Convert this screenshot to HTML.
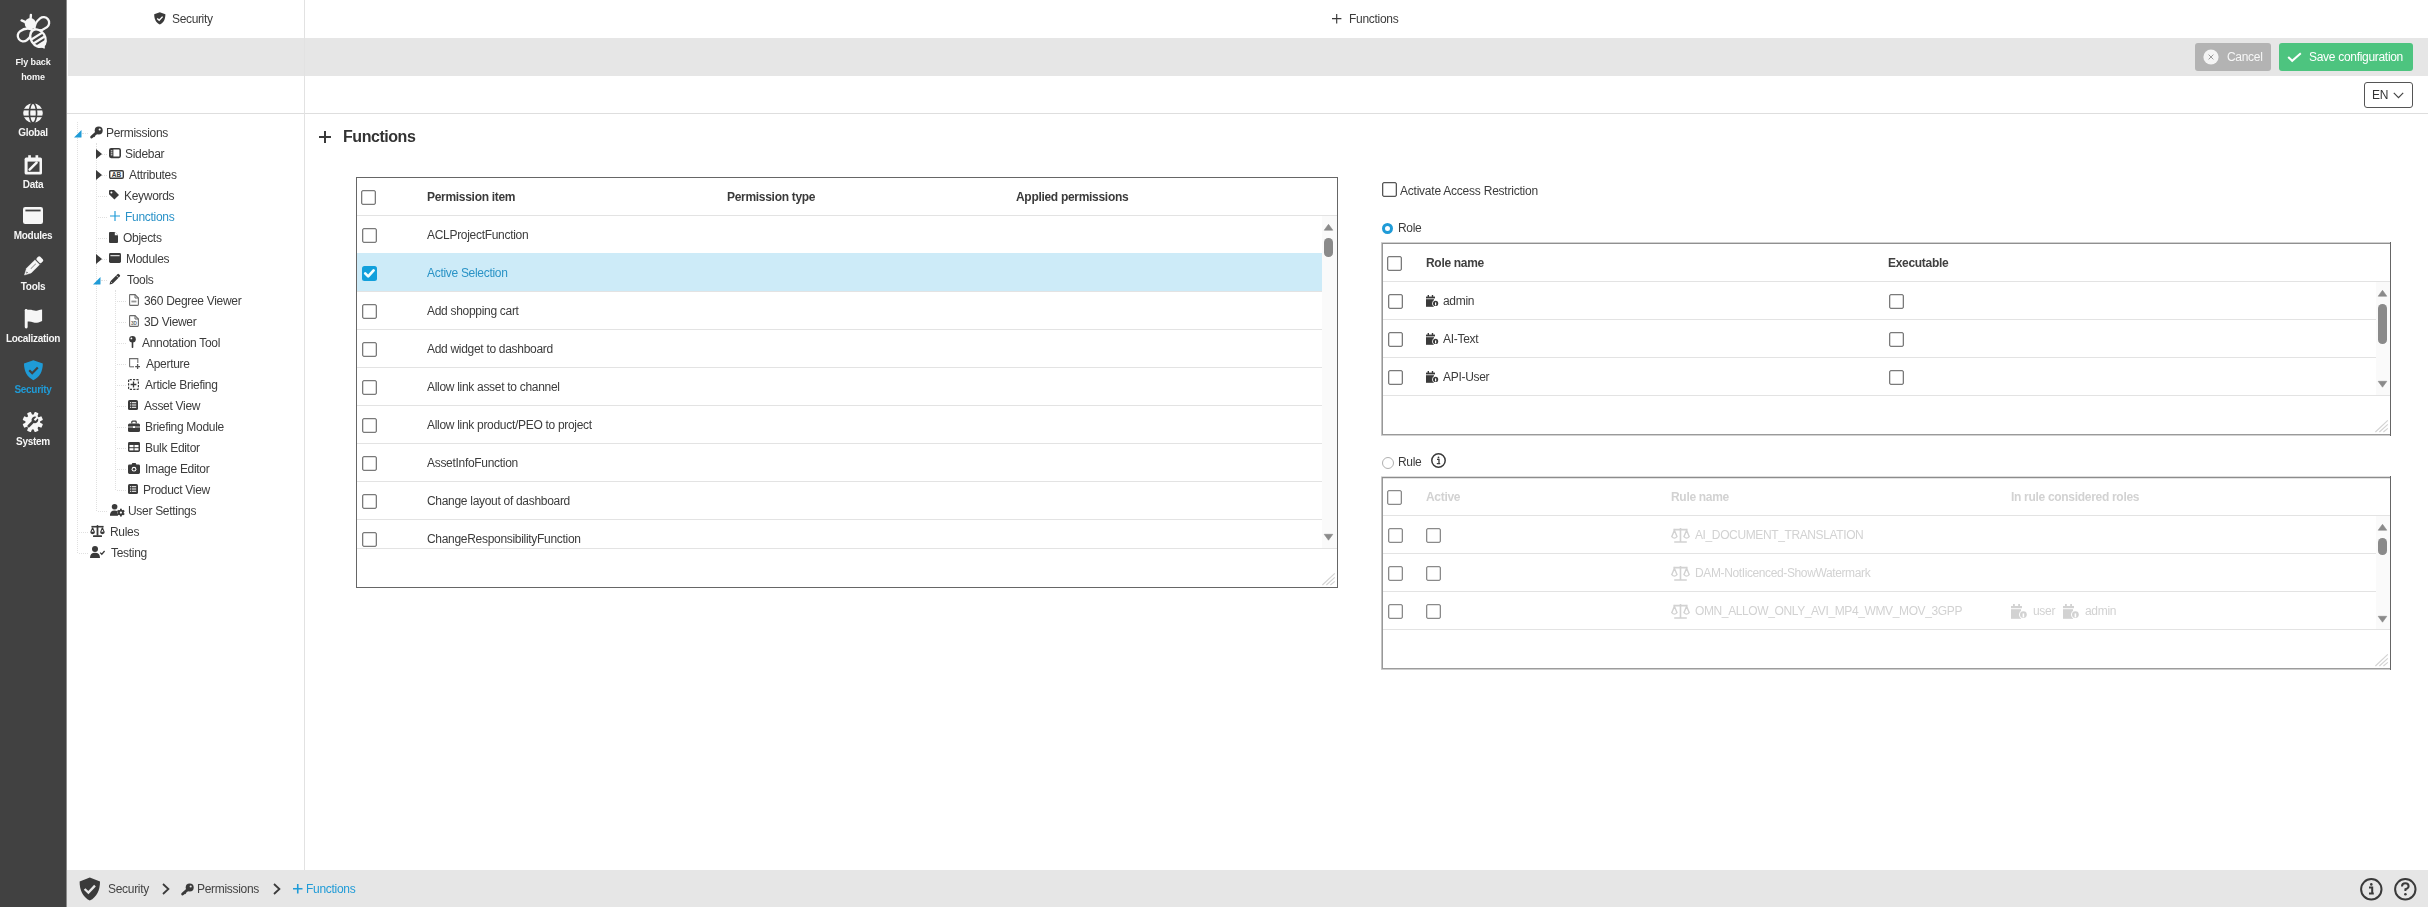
<!DOCTYPE html><html><head><meta charset="utf-8"><style>
html,body{margin:0;padding:0;width:2428px;height:907px;overflow:hidden;background:#fff;font-family:"Liberation Sans",sans-serif;}
.r{position:absolute;box-sizing:content-box}
.t{position:absolute;white-space:nowrap;font-family:"Liberation Sans",sans-serif;will-change:transform}
svg.r{overflow:visible}
</style></head><body>
<div class="r" style="left:0px;top:0px;width:66px;height:907px;background:#414141;"></div>
<div class="r" style="left:66px;top:0px;width:1px;height:907px;background:#8a8a8a;"></div>
<svg class="r" style="left:12px;top:10px;" width="44" height="44" viewBox="0 0 44 44">
    <defs><clipPath id="bodyclip"><ellipse cx="0" cy="0" rx="9.2" ry="7" /></clipPath></defs>
    <circle cx="18.3" cy="13.6" r="5.6" fill="#f6f6f6"/>
    <g stroke="#f6f6f6" stroke-width="2.4" stroke-linecap="round">
      <line x1="13.5" y1="12.2" x2="9.6" y2="10.4"/>
      <line x1="18.6" y1="8.6" x2="18.9" y2="4.9"/>
    </g>
    <path transform="translate(22.6 19.8) rotate(-38.3)" d="M0 0 C3.42 -5.60 8.60 -5.60 11.40 -5.60 A5.6 5.6 0 0 1 11.40 5.60 C8.60 5.60 3.42 5.60 0 0 Z" fill="none" stroke="#f6f6f6" stroke-width="2.3" stroke-linejoin="round"/>
    <path transform="translate(19.8 19.4) rotate(142.9)" d="M0 0 C3.18 -5.60 7.80 -5.60 10.60 -5.60 A5.6 5.6 0 0 1 10.60 5.60 C7.80 5.60 3.18 5.60 0 0 Z" fill="none" stroke="#f6f6f6" stroke-width="2.3" stroke-linejoin="round"/>
    <g transform="translate(26 28.2) rotate(58)">
      <ellipse cx="0" cy="0" rx="9.3" ry="7.1" fill="#414141" stroke="#f6f6f6" stroke-width="2.3"/>
      <g clip-path="url(#bodyclip)" fill="#f6f6f6">
        <rect x="-3.6" y="-9" width="2.3" height="18"/>
        <rect x="0.9" y="-9" width="2.3" height="18"/>
        <rect x="5.2" y="-9" width="6" height="18"/>
      </g>
      <path d="M8.4 -2 L11.6 0 L8.4 2 Z" fill="#f6f6f6" stroke="#f6f6f6" stroke-width="1.2" stroke-linejoin="round"/>
    </g>
    </svg>
<div class="t" style="left:0px;top:55px;font-size:9px;line-height:14px;color:#f6f6f6;letter-spacing:-0.1px;font-weight:700;width:66px;text-align:center;">Fly back</div>
<div class="t" style="left:0px;top:70px;font-size:9px;line-height:14px;color:#f6f6f6;letter-spacing:-0.1px;font-weight:700;width:66px;text-align:center;">home</div>
<svg class="r" style="left:23px;top:103px;" width="20" height="20" viewBox="0 0 20 20"><circle cx="10" cy="10" r="9.8" fill="#f6f6f6"/>
    <g fill="none" stroke="#414141" stroke-width="1.6">
      <ellipse cx="10" cy="10" rx="3.6" ry="9.8"/>
      <line x1="0" y1="6.6" x2="20" y2="6.6"/><line x1="0" y1="13.4" x2="20" y2="13.4"/>
    </g></svg>
<div class="t" style="left:0px;top:126px;font-size:10px;line-height:14px;color:#f6f6f6;letter-spacing:-0.3px;font-weight:700;width:66px;text-align:center;">Global</div>
<div class="t" style="left:0px;top:178px;font-size:10px;line-height:14px;color:#f6f6f6;letter-spacing:-0.3px;font-weight:700;width:66px;text-align:center;">Data</div>
<div class="t" style="left:0px;top:229px;font-size:10px;line-height:14px;color:#f6f6f6;letter-spacing:-0.3px;font-weight:700;width:66px;text-align:center;">Modules</div>
<div class="t" style="left:0px;top:280px;font-size:10px;line-height:14px;color:#f6f6f6;letter-spacing:-0.3px;font-weight:700;width:66px;text-align:center;">Tools</div>
<div class="t" style="left:0px;top:332px;font-size:10px;line-height:14px;color:#f6f6f6;letter-spacing:-0.3px;font-weight:700;width:66px;text-align:center;">Localization</div>
<div class="t" style="left:0px;top:383px;font-size:10px;line-height:14px;color:#1f9bd7;letter-spacing:-0.3px;font-weight:700;width:66px;text-align:center;">Security</div>
<div class="t" style="left:0px;top:435px;font-size:10px;line-height:14px;color:#f6f6f6;letter-spacing:-0.3px;font-weight:700;width:66px;text-align:center;">System</div>
<svg class="r" style="left:24px;top:155px;" width="19" height="20" viewBox="0 0 19 20"><rect x="0.6" y="2.6" width="17.4" height="17" rx="1.6" fill="#f6f6f6"/>
    <rect x="3.6" y="6.6" width="11.9" height="10.2" fill="#414141"/>
    <rect x="4.2" y="0.2" width="2.7" height="3" fill="#f6f6f6"/><rect x="11.5" y="0.2" width="2.7" height="3" fill="#f6f6f6"/>
    <path d="M5.6 14.6 L12.6 7.6" stroke="#f6f6f6" stroke-width="2.5" stroke-linecap="round"/></svg>
<svg class="r" style="left:23px;top:207px;" width="20" height="17" viewBox="0 0 20 17"><rect x="0" y="0" width="20" height="17" rx="2.2" fill="#f6f6f6"/><rect x="2.4" y="2.6" width="15.2" height="1.8" fill="#414141"/></svg>
<svg class="r" style="left:22.8px;top:256.3px;" width="20" height="21" viewBox="0 0 20 21"><g transform="rotate(45 10 10.5)">
    <rect x="6.7" y="-1.6" width="6.6" height="5" rx="1.6" fill="#f6f6f6"/>
    <path d="M6.7 4.2 H13.3 V16.4 L10 22.6 L6.7 16.4 Z" fill="#f6f6f6" stroke="#f6f6f6" stroke-width="0.4" stroke-linejoin="round"/>
    <rect x="6.4" y="3.4" width="7.2" height="0.9" fill="#414141" opacity="0.75"/>
    <rect x="9.6" y="6.6" width="0.9" height="7" fill="#414141" opacity="0.6"/>
    <path d="M9 18.4 L11 18.4 L10 20.4 Z" fill="#414141" opacity="0.8"/>
    </g></svg>
<svg class="r" style="left:24px;top:308.5px;" width="19" height="20" viewBox="0 0 19 20"><rect x="0.75" y="0" width="2.9" height="19.4" rx="1.3" fill="#f6f6f6"/>
    <path d="M2.4 1.4 C7 -0.2 10 2.4 13.6 1.4 C15.4 0.9 16.8 0.6 18.1 0.6 L18.1 12 C16.6 12.6 15 13.6 13 13.8 C9.4 14 7 11.4 2.4 12.8 Z" fill="#f6f6f6"/></svg>
<svg class="r" style="left:24px;top:360px;" width="19" height="21" viewBox="0 0 19 21"><path d="M9.4 0.2 L18.8 3.6 C18.8 11 16 17 9.4 20.3 C2.8 17 0 11 0 3.6 Z" fill="#1f9bd7"/>
    <path d="M5.2 10.2 L8.2 13.2 L13.8 7.4" fill="none" stroke="#414141" stroke-width="2.2"/></svg>
<svg class="r" style="left:23px;top:412px;" width="20" height="21" viewBox="0 0 20 21"><g transform="translate(9.8 10)">
    <g fill="#f6f6f6"><circle r="7.4"/><rect x="-2.1" y="-10.2" width="4.2" height="5" rx="0.8" transform="rotate(22.5)"/><rect x="-2.1" y="-10.2" width="4.2" height="5" rx="0.8" transform="rotate(67.5)"/><rect x="-2.1" y="-10.2" width="4.2" height="5" rx="0.8" transform="rotate(112.5)"/><rect x="-2.1" y="-10.2" width="4.2" height="5" rx="0.8" transform="rotate(157.5)"/><rect x="-2.1" y="-10.2" width="4.2" height="5" rx="0.8" transform="rotate(202.5)"/><rect x="-2.1" y="-10.2" width="4.2" height="5" rx="0.8" transform="rotate(247.5)"/><rect x="-2.1" y="-10.2" width="4.2" height="5" rx="0.8" transform="rotate(292.5)"/><rect x="-2.1" y="-10.2" width="4.2" height="5" rx="0.8" transform="rotate(337.5)"/></g>
    <g transform="rotate(45)">
      <rect x="-1.3" y="-2" width="2.6" height="9" rx="1" fill="#414141"/>
      <circle cx="0" cy="-3" r="3.2" fill="#414141"/>
      <rect x="-1.1" y="-7" width="2.2" height="4.6" fill="#f6f6f6"/>
    </g>
    </g></svg>
<div class="r" style="left:68px;top:38px;width:2360px;height:38px;background:#e6e6e6;"></div>
<div class="r" style="left:67px;top:113px;width:2361px;height:1px;background:#dedede;"></div>
<div class="r" style="left:304px;top:0px;width:1px;height:870px;background:#e2e2e2;"></div>
<div class="r" style="left:67px;top:870px;width:2361px;height:37px;background:#e6e6e6;"></div>
<svg class="r" style="left:153.8px;top:12.3px;" width="12" height="13" viewBox="0 0 12 13"><path d="M5.8 0.2 L11.4 2.2 C11.4 7 9.8 10.6 5.8 12.6 C1.8 10.6 0.2 7 0.2 2.2 Z" fill="#3a3a3a"/><path d="M3.2 6.4 L5.2 8.3 L8.6 4.6" fill="none" stroke="#fff" stroke-width="1.4"/></svg>
<div class="t" style="left:171.6px;top:12px;font-size:12px;line-height:14px;color:#3c3c3c;letter-spacing:-0.35px;">Security</div>
<svg class="r" style="left:1332px;top:14px;" width="9.4" height="9.4" viewBox="0 0 9.4 9.4"><path d="M4.7 0 V9.4 M0 4.7 H9.4" stroke="#3a3a3a" stroke-width="1.15"/></svg>
<div class="t" style="left:1349px;top:12px;font-size:12px;line-height:14px;color:#3c3c3c;letter-spacing:-0.3px;">Functions</div>
<div class="r" style="left:77px;top:122px;width:0;height:431px;border-left:1px dotted #e0e0e0"></div>
<div class="r" style="left:96px;top:143px;width:0;height:368px;border-left:1px dotted #e0e0e0"></div>
<div class="r" style="left:115px;top:290px;width:0;height:200px;border-left:1px dotted #e0e0e0"></div>
<div class="r" style="left:82px;top:133px;width:6px;height:0;border-top:1px dotted #e0e0e0"></div>
<svg class="r" style="left:74px;top:129.5px;" width="8" height="8" viewBox="0 0 8 8"><path d="M7.5 0 L7.5 7 Q7.5 7.5 7 7.5 L0 7.5 Z" fill="#1f9bd7"/></svg>
<svg class="r" style="left:90px;top:126.0px;" width="13" height="12" viewBox="0 0 13 12"><circle cx="8.7" cy="4.6" r="4" fill="#3a3a3a"/><circle cx="9.7" cy="3.5" r="1.05" fill="#fff"/><path d="M6.6 6.6 L1.6 11" stroke="#3a3a3a" stroke-width="2.8" stroke-linecap="round"/><path d="M3.2 9.4 L4.6 10.8" stroke="#3a3a3a" stroke-width="1.6"/></svg>
<div class="t" style="left:106.2px;top:126px;font-size:12px;line-height:14px;color:#3c3c3c;letter-spacing:-0.3px;">Permissions</div>
<div class="r" style="left:101px;top:154px;width:6px;height:0;border-top:1px dotted #e0e0e0"></div>
<svg class="r" style="left:96px;top:148.5px;" width="6" height="10" viewBox="0 0 6 10"><path d="M0 0 L6 5 L0 10 Z" fill="#3a3a3a"/></svg>
<svg class="r" style="left:109px;top:148.0px;" width="12" height="10" viewBox="0 0 12 10"><rect x="0.8" y="0.8" width="10.4" height="8.6" rx="1.3" fill="none" stroke="#3a3a3a" stroke-width="1.6"/><rect x="1" y="1" width="3.4" height="8" fill="#3a3a3a"/><rect x="1.8" y="2.4" width="1.6" height="0.9" fill="#fff"/><rect x="1.8" y="4.4" width="1.6" height="0.9" fill="#fff"/><rect x="1.8" y="6.4" width="1.6" height="0.9" fill="#fff"/></svg>
<div class="t" style="left:125.1px;top:147px;font-size:12px;line-height:14px;color:#3c3c3c;letter-spacing:-0.3px;">Sidebar</div>
<div class="r" style="left:101px;top:175px;width:6px;height:0;border-top:1px dotted #e0e0e0"></div>
<svg class="r" style="left:96px;top:169.5px;" width="6" height="10" viewBox="0 0 6 10"><path d="M0 0 L6 5 L0 10 Z" fill="#3a3a3a"/></svg>
<svg class="r" style="left:109px;top:169.5px;" width="15" height="9" viewBox="0 0 15 9"><rect x="0.7" y="0.7" width="13.6" height="7.6" rx="1.2" fill="none" stroke="#3a3a3a" stroke-width="1.4"/><text x="7.4" y="7.2" font-family="Liberation Sans" font-weight="700" font-size="6.5" text-anchor="middle" fill="#3a3a3a">AB</text></svg>
<div class="t" style="left:129.2px;top:168px;font-size:12px;line-height:14px;color:#3c3c3c;letter-spacing:-0.3px;">Attributes</div>
<div class="r" style="left:98px;top:196px;width:9px;height:0;border-top:1px dotted #e0e0e0"></div>
<svg class="r" style="left:109px;top:190.0px;" width="10" height="10" viewBox="0 0 10 10"><path d="M0 1 Q0 0 1 0 L5 0 L10 5 L5.4 9.6 L0 4.2 Z" fill="#3a3a3a"/><circle cx="2.4" cy="2.4" r="1" fill="#fff"/></svg>
<div class="t" style="left:123.8px;top:189px;font-size:12px;line-height:14px;color:#3c3c3c;letter-spacing:-0.3px;">Keywords</div>
<div class="r" style="left:98px;top:217px;width:9px;height:0;border-top:1px dotted #e0e0e0"></div>
<svg class="r" style="left:109.6px;top:211.0px;" width="10" height="10" viewBox="0 0 10 10"><path d="M5 0 V10 M0 5 H10" stroke="#1f9bd7" stroke-width="1.15"/></svg>
<div class="t" style="left:125.4px;top:210px;font-size:12px;line-height:14px;color:#2a92c8;letter-spacing:-0.3px;">Functions</div>
<div class="r" style="left:98px;top:238px;width:9px;height:0;border-top:1px dotted #e0e0e0"></div>
<svg class="r" style="left:109px;top:231.5px;" width="9" height="11" viewBox="0 0 9 11"><path d="M1 0 H5.8 L9 3.2 V10 Q9 11 8 11 H1 Q0 11 0 10 V1 Q0 0 1 0 Z" fill="#3a3a3a"/><path d="M5.8 0 V3.2 H9" fill="#fff"/></svg>
<div class="t" style="left:122.6px;top:231px;font-size:12px;line-height:14px;color:#3c3c3c;letter-spacing:-0.3px;">Objects</div>
<div class="r" style="left:101px;top:259px;width:6px;height:0;border-top:1px dotted #e0e0e0"></div>
<svg class="r" style="left:96px;top:253.5px;" width="6" height="10" viewBox="0 0 6 10"><path d="M0 0 L6 5 L0 10 Z" fill="#3a3a3a"/></svg>
<svg class="r" style="left:109px;top:253.0px;" width="12" height="10" viewBox="0 0 12 10"><rect x="0" y="0" width="12" height="10" rx="1.4" fill="#3a3a3a"/><rect x="1.4" y="2.2" width="9.2" height="1" fill="#fff"/></svg>
<div class="t" style="left:125.5px;top:252px;font-size:12px;line-height:14px;color:#3c3c3c;letter-spacing:-0.3px;">Modules</div>
<div class="r" style="left:101px;top:280px;width:6px;height:0;border-top:1px dotted #e0e0e0"></div>
<svg class="r" style="left:93px;top:276.5px;" width="8" height="8" viewBox="0 0 8 8"><path d="M7.5 0 L7.5 7 Q7.5 7.5 7 7.5 L0 7.5 Z" fill="#1f9bd7"/></svg>
<svg class="r" style="left:109px;top:273.0px;" width="12" height="12" viewBox="0 0 12 12"><path d="M0.6 11.4 L1.2 8.4 L8.4 1.2 Q9.2 0.4 10 1.2 L10.8 2 Q11.6 2.8 10.8 3.6 L3.6 10.8 Z" fill="#3a3a3a"/><path d="M7.4 2.6 L9.4 4.6" stroke="#fff" stroke-width="0.8"/><path d="M1.6 8.6 L3.4 10.4" stroke="#fff" stroke-width="0.6"/></svg>
<div class="t" style="left:127.1px;top:273px;font-size:12px;line-height:14px;color:#3c3c3c;letter-spacing:-0.3px;">Tools</div>
<div class="r" style="left:117px;top:301px;width:9px;height:0;border-top:1px dotted #e0e0e0"></div>
<svg class="r" style="left:128.5px;top:294.0px;" width="10" height="12" viewBox="0 0 10 12"><path d="M1 0.6 H6 L9.4 4 V10.6 Q9.4 11.4 8.6 11.4 H1 Q0.6 11.4 0.6 10.6 V1.4 Q0.6 0.6 1 0.6 Z" fill="none" stroke="#6a6a6a" stroke-width="1.1"/><path d="M6 0.6 V4 H9.4" fill="none" stroke="#6a6a6a" stroke-width="1"/><rect x="2.4" y="6.6" width="5" height="1.8" fill="#6a6a6a" opacity="0.7"/></svg>
<div class="t" style="left:144.1px;top:294px;font-size:12px;line-height:14px;color:#3c3c3c;letter-spacing:-0.3px;">360 Degree Viewer</div>
<div class="r" style="left:117px;top:322px;width:9px;height:0;border-top:1px dotted #e0e0e0"></div>
<svg class="r" style="left:128.5px;top:315.0px;" width="10" height="12" viewBox="0 0 10 12"><path d="M1 0.6 H6 L9.4 4 V10.6 Q9.4 11.4 8.6 11.4 H1 Q0.6 11.4 0.6 10.6 V1.4 Q0.6 0.6 1 0.6 Z" fill="none" stroke="#6a6a6a" stroke-width="1.1"/><path d="M6 0.6 V4 H9.4" fill="none" stroke="#6a6a6a" stroke-width="1"/><text x="5" y="9.6" font-family="Liberation Sans" font-size="4.6" font-weight="700" text-anchor="middle" fill="#6a6a6a">3D</text></svg>
<div class="t" style="left:144.1px;top:315px;font-size:12px;line-height:14px;color:#3c3c3c;letter-spacing:-0.3px;">3D Viewer</div>
<div class="r" style="left:117px;top:343px;width:9px;height:0;border-top:1px dotted #e0e0e0"></div>
<svg class="r" style="left:128.5px;top:336.0px;" width="7" height="12" viewBox="0 0 7 12"><circle cx="3.5" cy="3.3" r="3.3" fill="#3a3a3a"/><rect x="2.7" y="5" width="1.6" height="7" rx="0.7" fill="#3a3a3a"/><circle cx="2.4" cy="2.4" r="0.9" fill="#fff"/></svg>
<div class="t" style="left:142.0px;top:336px;font-size:12px;line-height:14px;color:#3c3c3c;letter-spacing:-0.3px;">Annotation Tool</div>
<div class="r" style="left:117px;top:364px;width:9px;height:0;border-top:1px dotted #e0e0e0"></div>
<svg class="r" style="left:128.5px;top:357.5px;" width="11" height="11" viewBox="0 0 11 11"><path d="M0.6 8.8 V0.6 H8.8 V5" fill="none" stroke="#555" stroke-width="1.1" opacity="0.85"/><path d="M0.6 8.8 H5" fill="none" stroke="#555" stroke-width="1.1" opacity="0.85"/><path d="M8.6 6 V11 M6.2 8.6 H11" stroke="#555" stroke-width="1.3"/></svg>
<div class="t" style="left:146.2px;top:357px;font-size:12px;line-height:14px;color:#3c3c3c;letter-spacing:-0.3px;">Aperture</div>
<div class="r" style="left:117px;top:385px;width:9px;height:0;border-top:1px dotted #e0e0e0"></div>
<svg class="r" style="left:128.2px;top:378.5px;" width="11" height="11" viewBox="0 0 11 11"><rect x="0.6" y="0.6" width="9.8" height="9.8" rx="1" fill="none" stroke="#3a3a3a" stroke-width="1.2" stroke-dasharray="2.2 1.2"/><path d="M5.5 2.6 V8.4 M2.6 5.5 H8.4" stroke="#3a3a3a" stroke-width="1.3"/></svg>
<div class="t" style="left:145.0px;top:378px;font-size:12px;line-height:14px;color:#3c3c3c;letter-spacing:-0.3px;">Article Briefing</div>
<div class="r" style="left:117px;top:406px;width:9px;height:0;border-top:1px dotted #e0e0e0"></div>
<svg class="r" style="left:128.2px;top:400.0px;" width="10" height="10" viewBox="0 0 10 10"><rect x="0" y="0" width="10" height="10" rx="1.6" fill="#3a3a3a"/><rect x="2" y="2.2" width="1.1" height="1" fill="#fff"/><rect x="3.8" y="2.2" width="4.4" height="1" fill="#fff"/><rect x="2" y="4.5" width="1.1" height="1" fill="#fff"/><rect x="3.8" y="4.5" width="4.4" height="1" fill="#fff"/><rect x="2" y="6.8" width="1.1" height="1" fill="#fff"/><rect x="3.8" y="6.8" width="4.4" height="1" fill="#fff"/></svg>
<div class="t" style="left:144.0px;top:399px;font-size:12px;line-height:14px;color:#3c3c3c;letter-spacing:-0.3px;">Asset View</div>
<div class="r" style="left:117px;top:427px;width:9px;height:0;border-top:1px dotted #e0e0e0"></div>
<svg class="r" style="left:128.2px;top:420.5px;" width="12" height="11" viewBox="0 0 12 11"><path d="M3.8 2.4 V1 Q3.8 0.2 4.6 0.2 H7.4 Q8.2 0.2 8.2 1 V2.4" fill="none" stroke="#3a3a3a" stroke-width="1.2"/><rect x="0" y="2.4" width="12" height="8.6" rx="1.5" fill="#3a3a3a"/><rect x="0" y="5.6" width="12" height="0.8" fill="#fff"/><rect x="5" y="5.2" width="2" height="1.8" fill="#fff"/></svg>
<div class="t" style="left:144.9px;top:420px;font-size:12px;line-height:14px;color:#3c3c3c;letter-spacing:-0.3px;">Briefing Module</div>
<div class="r" style="left:117px;top:448px;width:9px;height:0;border-top:1px dotted #e0e0e0"></div>
<svg class="r" style="left:128.2px;top:442.0px;" width="12" height="10" viewBox="0 0 12 10"><rect x="0" y="0" width="12" height="10" rx="1.4" fill="#3a3a3a"/><rect x="1.5" y="3" width="4" height="2.2" fill="#fff"/><rect x="6.5" y="3" width="4" height="2.2" fill="#fff"/><rect x="1.5" y="6.2" width="4" height="2.2" fill="#fff"/><rect x="6.5" y="6.2" width="4" height="2.2" fill="#fff"/></svg>
<div class="t" style="left:145.1px;top:441px;font-size:12px;line-height:14px;color:#3c3c3c;letter-spacing:-0.3px;">Bulk Editor</div>
<div class="r" style="left:117px;top:469px;width:9px;height:0;border-top:1px dotted #e0e0e0"></div>
<svg class="r" style="left:128.2px;top:462.5px;" width="12" height="11" viewBox="0 0 12 11"><path d="M3.6 1.6 L4.4 0 H7.6 L8.4 1.6 H10.6 Q12 1.6 12 3 V9.6 Q12 11 10.6 11 H1.4 Q0 11 0 9.6 V3 Q0 1.6 1.4 1.6 Z" fill="#3a3a3a"/><circle cx="6" cy="6.2" r="2.4" fill="#fff"/><circle cx="6" cy="6.2" r="1.3" fill="#3a3a3a"/></svg>
<div class="t" style="left:144.6px;top:462px;font-size:12px;line-height:14px;color:#3c3c3c;letter-spacing:-0.3px;">Image Editor</div>
<div class="r" style="left:117px;top:490px;width:9px;height:0;border-top:1px dotted #e0e0e0"></div>
<svg class="r" style="left:128.2px;top:484.0px;" width="10" height="10" viewBox="0 0 10 10"><rect x="0" y="0" width="10" height="10" rx="1.6" fill="#3a3a3a"/><rect x="2" y="2.2" width="1.1" height="1" fill="#fff"/><rect x="3.8" y="2.2" width="4.4" height="1" fill="#fff"/><rect x="2" y="4.5" width="1.1" height="1" fill="#fff"/><rect x="3.8" y="4.5" width="4.4" height="1" fill="#fff"/><rect x="2" y="6.8" width="1.1" height="1" fill="#fff"/><rect x="3.8" y="6.8" width="4.4" height="1" fill="#fff"/></svg>
<div class="t" style="left:143.4px;top:483px;font-size:12px;line-height:14px;color:#3c3c3c;letter-spacing:-0.3px;">Product View</div>
<div class="r" style="left:98px;top:511px;width:9px;height:0;border-top:1px dotted #e0e0e0"></div>
<svg class="r" style="left:109.5px;top:504.0px;" width="14" height="12" viewBox="0 0 14 12"><circle cx="4.6" cy="2.8" r="2.8" fill="#3a3a3a"/><path d="M0 11.6 Q0 6.6 4.6 6.6 Q6.4 6.6 7.6 7.3 L7.6 11.6 Z" fill="#3a3a3a"/><rect x="0" y="10" width="8" height="1.6" fill="#3a3a3a"/><g transform="translate(10.9 8.6)" fill="#3a3a3a"><circle r="2.9"/><rect x="-0.9" y="-3.9" width="1.8" height="2.2" transform="rotate(0)"/><rect x="-0.9" y="-3.9" width="1.8" height="2.2" transform="rotate(60)"/><rect x="-0.9" y="-3.9" width="1.8" height="2.2" transform="rotate(120)"/><rect x="-0.9" y="-3.9" width="1.8" height="2.2" transform="rotate(180)"/><rect x="-0.9" y="-3.9" width="1.8" height="2.2" transform="rotate(240)"/><rect x="-0.9" y="-3.9" width="1.8" height="2.2" transform="rotate(300)"/></g><circle cx="10.9" cy="8.6" r="1.1" fill="#fff"/></svg>
<div class="t" style="left:128.1px;top:504px;font-size:12px;line-height:14px;color:#3c3c3c;letter-spacing:-0.3px;">User Settings</div>
<div class="r" style="left:79px;top:532px;width:9px;height:0;border-top:1px dotted #e0e0e0"></div>
<svg class="r" style="left:90px;top:525.0px;" width="15" height="12" viewBox="0 0 15 12"><rect x="1.4" y="0.9" width="12.2" height="1.6" fill="#3a3a3a"/><circle cx="7.5" cy="0.9" r="0.9" fill="#3a3a3a"/><rect x="6.6" y="1" width="1.8" height="9.6" fill="#3a3a3a"/><rect x="3" y="10.2" width="9" height="1.8" rx="0.5" fill="#3a3a3a"/><path d="M2.6 2.6 L0.9 7 M2.6 2.6 L4.3 7 M12.4 2.6 L10.7 7 M12.4 2.6 L14.1 7" stroke="#3a3a3a" stroke-width="1.1" fill="none"/><path d="M0.2 6.8 H5 A2.4 2.4 0 0 1 0.2 6.8 Z M10 6.8 H14.8 A2.4 2.4 0 0 1 10 6.8 Z" fill="#3a3a3a"/></svg>
<div class="t" style="left:110.0px;top:525px;font-size:12px;line-height:14px;color:#3c3c3c;letter-spacing:-0.3px;">Rules</div>
<div class="r" style="left:79px;top:553px;width:9px;height:0;border-top:1px dotted #e0e0e0"></div>
<svg class="r" style="left:90px;top:546.0px;" width="15" height="12" viewBox="0 0 15 12"><circle cx="5" cy="3" r="3" fill="#3a3a3a"/><path d="M0 12 Q0 6.8 5 6.8 Q10 6.8 10 12 Z" fill="#3a3a3a"/><path d="M10.2 6.6 L11.8 8.2 L14.6 5" fill="none" stroke="#3a3a3a" stroke-width="1.3"/></svg>
<div class="t" style="left:111.0px;top:546px;font-size:12px;line-height:14px;color:#3c3c3c;letter-spacing:-0.3px;">Testing</div>
<svg class="r" style="left:319px;top:131px;" width="12" height="12" viewBox="0 0 12 12"><path d="M6 0 V12 M0 6 H12" stroke="#3a3a3a" stroke-width="2"/></svg>
<div class="t" style="left:343.2px;top:128px;font-size:16px;line-height:18px;color:#333;letter-spacing:-0.45px;font-weight:700;">Functions</div>
<div class="r" style="left:356px;top:177px;width:980px;height:409px;border:1px solid #666666"></div>
<div class="r" style="left:357px;top:215px;width:980px;height:1px;background:#e3e3e3;"></div>
<div class="r" style="left:361px;top:190px;width:13px;height:13px;border:1px solid #7a7a7a;border-radius:2px;box-shadow:inset 0 0 0 0.3px #7a7a7a"></div>
<div class="t" style="left:427px;top:190px;font-size:12px;line-height:14px;color:#3a3a3a;letter-spacing:-0.3px;font-weight:700;">Permission item</div>
<div class="t" style="left:726.5px;top:190px;font-size:12px;line-height:14px;color:#3a3a3a;letter-spacing:-0.3px;font-weight:700;">Permission type</div>
<div class="t" style="left:1016px;top:190px;font-size:12px;line-height:14px;color:#3a3a3a;letter-spacing:-0.3px;font-weight:700;">Applied permissions</div>
<div class="r" style="left:362px;top:228px;width:13px;height:13px;border:1px solid #7a7a7a;border-radius:2px;box-shadow:inset 0 0 0 0.3px #7a7a7a"></div>
<div class="r" style="left:357px;top:253px;width:965px;height:1px;background:#e3e3e3;"></div>
<div class="t" style="left:427px;top:228px;font-size:12px;line-height:14px;color:#3c3c3c;letter-spacing:-0.3px;">ACLProjectFunction</div>
<div class="r" style="left:357px;top:253px;width:965px;height:39px;background:#cdebf8;"></div>
<div class="r" style="left:362px;top:266px;width:15px;height:15px;background:#12a0dc;border-radius:2.5px"></div>
<svg class="r" style="left:362px;top:266px;" width="15" height="15" viewBox="0 0 15 15"><path d="M3.2 7.4 L6.2 10.4 L11.6 4.4" fill="none" stroke="#f4ffff" stroke-width="2.7" stroke-linecap="round" stroke-linejoin="round"/></svg>
<div class="r" style="left:357px;top:291px;width:965px;height:1px;background:#e3e3e3;"></div>
<div class="t" style="left:427px;top:266px;font-size:12px;line-height:14px;color:#2a93c6;letter-spacing:-0.3px;">Active Selection</div>
<div class="r" style="left:362px;top:304px;width:13px;height:13px;border:1px solid #7a7a7a;border-radius:2px;box-shadow:inset 0 0 0 0.3px #7a7a7a"></div>
<div class="r" style="left:357px;top:329px;width:965px;height:1px;background:#e3e3e3;"></div>
<div class="t" style="left:427px;top:304px;font-size:12px;line-height:14px;color:#3c3c3c;letter-spacing:-0.3px;">Add shopping cart</div>
<div class="r" style="left:362px;top:342px;width:13px;height:13px;border:1px solid #7a7a7a;border-radius:2px;box-shadow:inset 0 0 0 0.3px #7a7a7a"></div>
<div class="r" style="left:357px;top:367px;width:965px;height:1px;background:#e3e3e3;"></div>
<div class="t" style="left:427px;top:342px;font-size:12px;line-height:14px;color:#3c3c3c;letter-spacing:-0.3px;">Add widget to dashboard</div>
<div class="r" style="left:362px;top:380px;width:13px;height:13px;border:1px solid #7a7a7a;border-radius:2px;box-shadow:inset 0 0 0 0.3px #7a7a7a"></div>
<div class="r" style="left:357px;top:405px;width:965px;height:1px;background:#e3e3e3;"></div>
<div class="t" style="left:427px;top:380px;font-size:12px;line-height:14px;color:#3c3c3c;letter-spacing:-0.3px;">Allow link asset to channel</div>
<div class="r" style="left:362px;top:418px;width:13px;height:13px;border:1px solid #7a7a7a;border-radius:2px;box-shadow:inset 0 0 0 0.3px #7a7a7a"></div>
<div class="r" style="left:357px;top:443px;width:965px;height:1px;background:#e3e3e3;"></div>
<div class="t" style="left:427px;top:418px;font-size:12px;line-height:14px;color:#3c3c3c;letter-spacing:-0.3px;">Allow link product/PEO to project</div>
<div class="r" style="left:362px;top:456px;width:13px;height:13px;border:1px solid #7a7a7a;border-radius:2px;box-shadow:inset 0 0 0 0.3px #7a7a7a"></div>
<div class="r" style="left:357px;top:481px;width:965px;height:1px;background:#e3e3e3;"></div>
<div class="t" style="left:427px;top:456px;font-size:12px;line-height:14px;color:#3c3c3c;letter-spacing:-0.3px;">AssetInfoFunction</div>
<div class="r" style="left:362px;top:494px;width:13px;height:13px;border:1px solid #7a7a7a;border-radius:2px;box-shadow:inset 0 0 0 0.3px #7a7a7a"></div>
<div class="r" style="left:357px;top:519px;width:965px;height:1px;background:#e3e3e3;"></div>
<div class="t" style="left:427px;top:494px;font-size:12px;line-height:14px;color:#3c3c3c;letter-spacing:-0.3px;">Change layout of dashboard</div>
<div class="r" style="left:362px;top:532px;width:13px;height:13px;border:1px solid #7a7a7a;border-radius:2px;box-shadow:inset 0 0 0 0.3px #7a7a7a"></div>
<div class="t" style="left:427px;top:532px;font-size:12px;line-height:14px;color:#3c3c3c;letter-spacing:-0.3px;">ChangeResponsibilityFunction</div>
<div class="r" style="left:357px;top:548px;width:980px;height:1px;background:#e3e3e3;"></div>
<div class="r" style="left:357px;top:549px;width:980px;height:37px;background:#fff;"></div>
<div class="r" style="left:1322px;top:216px;width:15px;height:332px;background:#fafafa;"></div>
<svg class="r" style="left:1324px;top:224px;" width="9" height="6.5" viewBox="0 0 9 6.5"><path d="M4.5 0.3 L8.8 6.2 L0.2 6.2 Z" fill="#8a8a8a" stroke="#8a8a8a" stroke-width="0.6" stroke-linejoin="round"/></svg>
<div class="r" style="left:1324.2px;top:238px;width:8.6px;height:19px;background:#8a8a8a;border-radius:4.3px;"></div>
<svg class="r" style="left:1324px;top:534px;" width="9" height="6.5" viewBox="0 0 9 6.5"><path d="M0.2 0.3 L8.8 0.3 L4.5 6.2 Z" fill="#8a8a8a" stroke="#8a8a8a" stroke-width="0.6" stroke-linejoin="round"/></svg>
<svg class="r" style="left:1323px;top:573px;" width="14" height="14" viewBox="0 0 14 14"><path d="M11.8 0.4 L-0.6 12 M11.8 4.4 L3.4 12 M11.8 8.4 L7.4 12" stroke="#d4d4d4" stroke-width="1.2"/></svg>
<div class="r" style="left:2195px;top:43px;width:76px;height:28px;background:#b3b3b3;border-radius:3px;"></div>
<svg class="r" style="left:2203px;top:49px;" width="16" height="16" viewBox="0 0 16 16"><circle cx="8" cy="8" r="7.6" fill="#f4f4f4"/><path d="M5.6 5.6 L10.4 10.4 M10.4 5.6 L5.6 10.4" stroke="#9a9a9a" stroke-width="1"/></svg>
<div class="t" style="left:2226.6px;top:50px;font-size:12px;line-height:14px;color:#f7f7f7;letter-spacing:-0.3px;">Cancel</div>
<div class="r" style="left:2279px;top:43px;width:134px;height:28px;background:#4dc47f;border-radius:3px;"></div>
<svg class="r" style="left:2287px;top:52px;" width="15" height="10" viewBox="0 0 15 10"><path d="M1.2 5 L5.2 8.8 L13.8 1.2" fill="none" stroke="#fff" stroke-width="2"/></svg>
<div class="t" style="left:2309px;top:50px;font-size:12px;line-height:14px;color:#fff;letter-spacing:-0.3px;">Save configuration</div>
<div class="r" style="left:2364px;top:82px;width:47px;height:24px;border:1px solid #555;border-radius:3px"></div>
<div class="t" style="left:2372px;top:88px;font-size:12px;line-height:14px;color:#333;letter-spacing:-0.2px;">EN</div>
<svg class="r" style="left:2393px;top:92px;" width="11" height="7" viewBox="0 0 11 7"><path d="M0.8 0.8 L5.5 5.6 L10.2 0.8" fill="none" stroke="#444" stroke-width="1.2"/></svg>
<svg class="r" style="left:79px;top:877px;" width="22" height="24" viewBox="0 0 22 24"><path d="M10.8 0.6 L21 4.4 C21 13.4 17.8 19.8 10.8 23.6 C3.8 19.8 0.6 13.4 0.6 4.4 Z" fill="#3a3a3a"/><path d="M5.6 12 L9.4 15.6 L16 8.6" fill="none" stroke="#e6e6e6" stroke-width="2.3"/></svg>
<div class="t" style="left:108px;top:882px;font-size:12px;line-height:14px;color:#444;letter-spacing:-0.3px;">Security</div>
<svg class="r" style="left:162px;top:883px;" width="8" height="12" viewBox="0 0 8 12"><path d="M1 1 L6.4 6 L1 11" fill="none" stroke="#3a3a3a" stroke-width="1.8"/></svg>
<svg class="r" style="left:181px;top:883px;" width="13" height="12" viewBox="0 0 13 12"><circle cx="8.7" cy="4.6" r="4" fill="#3a3a3a"/><circle cx="9.7" cy="3.5" r="1.05" fill="#e6e6e6"/><path d="M6.6 6.6 L1.6 11" stroke="#3a3a3a" stroke-width="2.8" stroke-linecap="round"/><path d="M3.2 9.4 L4.6 10.8" stroke="#3a3a3a" stroke-width="1.6"/></svg>
<div class="t" style="left:197px;top:882px;font-size:12px;line-height:14px;color:#444;letter-spacing:-0.3px;">Permissions</div>
<svg class="r" style="left:272.5px;top:883px;" width="8" height="12" viewBox="0 0 8 12"><path d="M1 1 L6.4 6 L1 11" fill="none" stroke="#3a3a3a" stroke-width="1.8"/></svg>
<svg class="r" style="left:292.5px;top:884px;" width="9.5" height="9.5" viewBox="0 0 9.5 9.5"><path d="M4.75 0 V9.5 M0 4.75 H9.5" stroke="#1f9bd7" stroke-width="1.6"/></svg>
<div class="t" style="left:305.5px;top:882px;font-size:12px;line-height:14px;color:#1f9bd7;letter-spacing:-0.3px;">Functions</div>
<svg class="r" style="left:2359.5px;top:878px;" width="23" height="23" viewBox="0 0 23 23"><circle cx="11.3" cy="11.3" r="10.2" fill="none" stroke="#3a3a3a" stroke-width="2"/><circle cx="11.3" cy="6.4" r="1.3" fill="#3a3a3a"/><path d="M9 9.4 H12.2 V15.4 M9 15.6 H13.8" fill="none" stroke="#3a3a3a" stroke-width="2"/></svg>
<svg class="r" style="left:2394px;top:878px;" width="23" height="23" viewBox="0 0 23 23"><circle cx="11.3" cy="11.3" r="10.2" fill="none" stroke="#3a3a3a" stroke-width="2"/><path d="M8 8.4 Q8 5.2 11.3 5.2 Q14.6 5.2 14.6 8.2 Q14.6 10.2 11.4 11.2 V13" fill="none" stroke="#3a3a3a" stroke-width="2"/><circle cx="11.4" cy="16.2" r="1.3" fill="#3a3a3a"/></svg>
<div class="r" style="left:1382px;top:182px;width:13px;height:13px;border:1px solid #555;border-radius:2px;box-shadow:inset 0 0 0 0.3px #555"></div>
<div class="t" style="left:1400.3px;top:184px;font-size:12px;line-height:14px;color:#3c3c3c;letter-spacing:-0.23px;">Activate Access Restriction</div>
<div class="r" style="left:1382px;top:223px;width:5px;height:5px;border:3px solid #1f9bd7;border-radius:50%"></div>
<div class="t" style="left:1398px;top:221px;font-size:12px;line-height:14px;color:#3c3c3c;letter-spacing:-0.3px;">Role</div>
<div class="r" style="left:1381px;top:243px;width:1px;height:192px;background:#c4c4c4;"></div>
<div class="r" style="left:1382px;top:243px;width:1px;height:192px;background:#989898;"></div>
<div class="r" style="left:1381px;top:242px;width:1010px;height:1px;background:#d0d0d0;"></div>
<div class="r" style="left:1382px;top:243px;width:1009px;height:1px;background:#909090;"></div>
<div class="r" style="left:1382px;top:434px;width:1009px;height:1px;background:#9a9a9a;"></div>
<div class="r" style="left:1381px;top:435px;width:1010px;height:1px;background:#d2d2d2;"></div>
<div class="r" style="left:2390px;top:242px;width:1px;height:194px;background:#666;"></div>
<div class="r" style="left:1383px;top:281px;width:1007px;height:1px;background:#e3e3e3;"></div>
<div class="r" style="left:1387px;top:256px;width:13px;height:13px;border:1px solid #7a7a7a;border-radius:2px;box-shadow:inset 0 0 0 0.3px #7a7a7a"></div>
<div class="t" style="left:1426px;top:256px;font-size:12px;line-height:14px;color:#404040;letter-spacing:-0.3px;font-weight:700;">Role name</div>
<div class="t" style="left:1888px;top:256px;font-size:12px;line-height:14px;color:#404040;letter-spacing:-0.3px;font-weight:700;">Executable</div>
<div class="r" style="left:1388px;top:294px;width:13px;height:13px;border:1px solid #7a7a7a;border-radius:2px;box-shadow:inset 0 0 0 0.3px #7a7a7a"></div>
<div class="r" style="left:1889px;top:294px;width:13px;height:13px;border:1px solid #7a7a7a;border-radius:2px;box-shadow:inset 0 0 0 0.3px #7a7a7a"></div>
<svg class="r" style="left:1426px;top:295px;" width="13" height="12" viewBox="0 0 13 12"><rect x="0" y="1.6" width="9" height="1.8" fill="#3a3a3a"/><rect x="1.6" y="0" width="1.4" height="2" fill="#3a3a3a"/><rect x="5.8" y="0" width="1.4" height="2" fill="#3a3a3a"/><rect x="0" y="4.2" width="8" height="7.6" fill="#3a3a3a"/><circle cx="9.6" cy="8.4" r="3.4" fill="#fff"/><circle cx="9.6" cy="8.4" r="2.6" fill="#3a3a3a"/><rect x="9" y="7.4" width="1.2" height="3" fill="#fff"/></svg>
<div class="t" style="left:1443.2px;top:294px;font-size:12px;line-height:14px;color:#3c3c3c;letter-spacing:-0.3px;">admin</div>
<div class="r" style="left:1383px;top:319px;width:993px;height:1px;background:#e3e3e3;"></div>
<div class="r" style="left:1388px;top:332px;width:13px;height:13px;border:1px solid #7a7a7a;border-radius:2px;box-shadow:inset 0 0 0 0.3px #7a7a7a"></div>
<div class="r" style="left:1889px;top:332px;width:13px;height:13px;border:1px solid #7a7a7a;border-radius:2px;box-shadow:inset 0 0 0 0.3px #7a7a7a"></div>
<svg class="r" style="left:1426px;top:333px;" width="13" height="12" viewBox="0 0 13 12"><rect x="0" y="1.6" width="9" height="1.8" fill="#3a3a3a"/><rect x="1.6" y="0" width="1.4" height="2" fill="#3a3a3a"/><rect x="5.8" y="0" width="1.4" height="2" fill="#3a3a3a"/><rect x="0" y="4.2" width="8" height="7.6" fill="#3a3a3a"/><circle cx="9.6" cy="8.4" r="3.4" fill="#fff"/><circle cx="9.6" cy="8.4" r="2.6" fill="#3a3a3a"/><rect x="9" y="7.4" width="1.2" height="3" fill="#fff"/></svg>
<div class="t" style="left:1443.2px;top:332px;font-size:12px;line-height:14px;color:#3c3c3c;letter-spacing:-0.3px;">AI-Text</div>
<div class="r" style="left:1383px;top:357px;width:993px;height:1px;background:#e3e3e3;"></div>
<div class="r" style="left:1388px;top:370px;width:13px;height:13px;border:1px solid #7a7a7a;border-radius:2px;box-shadow:inset 0 0 0 0.3px #7a7a7a"></div>
<div class="r" style="left:1889px;top:370px;width:13px;height:13px;border:1px solid #7a7a7a;border-radius:2px;box-shadow:inset 0 0 0 0.3px #7a7a7a"></div>
<svg class="r" style="left:1426px;top:371px;" width="13" height="12" viewBox="0 0 13 12"><rect x="0" y="1.6" width="9" height="1.8" fill="#3a3a3a"/><rect x="1.6" y="0" width="1.4" height="2" fill="#3a3a3a"/><rect x="5.8" y="0" width="1.4" height="2" fill="#3a3a3a"/><rect x="0" y="4.2" width="8" height="7.6" fill="#3a3a3a"/><circle cx="9.6" cy="8.4" r="3.4" fill="#fff"/><circle cx="9.6" cy="8.4" r="2.6" fill="#3a3a3a"/><rect x="9" y="7.4" width="1.2" height="3" fill="#fff"/></svg>
<div class="t" style="left:1443.2px;top:370px;font-size:12px;line-height:14px;color:#3c3c3c;letter-spacing:-0.3px;">API-User</div>
<div class="r" style="left:1383px;top:395px;width:1007px;height:1px;background:#e3e3e3;"></div>
<div class="r" style="left:2376px;top:282px;width:14px;height:113px;background:#fafafa;"></div>
<svg class="r" style="left:2378px;top:289.5px;" width="9" height="6.5" viewBox="0 0 9 6.5"><path d="M4.5 0.3 L8.8 6.2 L0.2 6.2 Z" fill="#8a8a8a" stroke="#8a8a8a" stroke-width="0.6" stroke-linejoin="round"/></svg>
<div class="r" style="left:2378.2px;top:304px;width:8.6px;height:39.5px;background:#8a8a8a;border-radius:4.3px;"></div>
<svg class="r" style="left:2378px;top:381px;" width="9" height="6.5" viewBox="0 0 9 6.5"><path d="M0.2 0.3 L8.8 0.3 L4.5 6.2 Z" fill="#8a8a8a" stroke="#8a8a8a" stroke-width="0.6" stroke-linejoin="round"/></svg>
<svg class="r" style="left:2376px;top:420px;" width="14" height="14" viewBox="0 0 14 14"><path d="M11.8 0.4 L-0.6 12 M11.8 4.4 L3.4 12 M11.8 8.4 L7.4 12" stroke="#d4d4d4" stroke-width="1.2"/></svg>
<div class="r" style="left:1382px;top:457px;width:10px;height:10px;border:1px solid #b0b0b0;border-radius:50%"></div>
<div class="t" style="left:1398px;top:455px;font-size:12px;line-height:14px;color:#3c3c3c;letter-spacing:-0.3px;">Rule</div>
<svg class="r" style="left:1431px;top:453px;" width="15" height="15" viewBox="0 0 15 15"><circle cx="7.5" cy="7.5" r="6.7" fill="none" stroke="#3a3a3a" stroke-width="1.5"/><circle cx="7.5" cy="4.4" r="0.9" fill="#3a3a3a"/><path d="M6 6.4 H8 V10.4 M5.8 10.6 H9.2" fill="none" stroke="#3a3a3a" stroke-width="1.3"/></svg>
<div class="r" style="left:1381px;top:477px;width:1px;height:192px;background:#c4c4c4;"></div>
<div class="r" style="left:1382px;top:477px;width:1px;height:192px;background:#989898;"></div>
<div class="r" style="left:1381px;top:476px;width:1010px;height:1px;background:#dedede;"></div>
<div class="r" style="left:1382px;top:477px;width:1009px;height:1px;background:#8c8c8c;"></div>
<div class="r" style="left:1383px;top:478px;width:1007px;height:1px;background:#e4e4e4;"></div>
<div class="r" style="left:1382px;top:668px;width:1009px;height:1px;background:#9c9c9c;"></div>
<div class="r" style="left:1381px;top:669px;width:1010px;height:1px;background:#cdcdcd;"></div>
<div class="r" style="left:2390px;top:476px;width:1px;height:194px;background:#666;"></div>
<div class="r" style="left:1383px;top:515px;width:1007px;height:1px;background:#e3e3e3;"></div>
<div class="r" style="left:1387px;top:490px;width:13px;height:13px;border:1px solid #8a8a8a;border-radius:2px;box-shadow:inset 0 0 0 0.3px #8a8a8a"></div>
<div class="t" style="left:1426px;top:490px;font-size:12px;line-height:14px;color:#d2d2d2;letter-spacing:-0.3px;font-weight:700;">Active</div>
<div class="t" style="left:1671px;top:490px;font-size:12px;line-height:14px;color:#d2d2d2;letter-spacing:-0.3px;font-weight:700;">Rule name</div>
<div class="t" style="left:2011px;top:490px;font-size:12px;line-height:14px;color:#d2d2d2;letter-spacing:-0.3px;font-weight:700;">In rule considered roles</div>
<div class="r" style="left:1388px;top:528px;width:13px;height:13px;border:1px solid #8a8a8a;border-radius:2px;box-shadow:inset 0 0 0 0.3px #8a8a8a"></div>
<div class="r" style="left:1426px;top:528px;width:13px;height:13px;border:1px solid #8a8a8a;border-radius:2px;box-shadow:inset 0 0 0 0.3px #8a8a8a"></div>
<svg class="r" style="left:1671px;top:527px;" width="19" height="16" viewBox="0 0 19 16"><path d="M9.5 1 V14.6 M3.2 15 H15.8 M2.4 2.6 H16.6" stroke="#d2d2d2" stroke-width="1.6" fill="none"/><path d="M0.8 9.6 L3.4 3.4 L6 9.6 Q3.4 12.6 0.8 9.6 Z M13 9.6 L15.6 3.4 L18.2 9.6 Q15.6 12.6 13 9.6 Z" fill="none" stroke="#d2d2d2" stroke-width="1.4"/></svg>
<div class="t" style="left:1695px;top:528px;font-size:12px;line-height:14px;color:#d2d2d2;letter-spacing:-0.38px;">AI_DOCUMENT_TRANSLATION</div>
<div class="r" style="left:1383px;top:553px;width:993px;height:1px;background:#e3e3e3;"></div>
<div class="r" style="left:1388px;top:566px;width:13px;height:13px;border:1px solid #8a8a8a;border-radius:2px;box-shadow:inset 0 0 0 0.3px #8a8a8a"></div>
<div class="r" style="left:1426px;top:566px;width:13px;height:13px;border:1px solid #8a8a8a;border-radius:2px;box-shadow:inset 0 0 0 0.3px #8a8a8a"></div>
<svg class="r" style="left:1671px;top:565px;" width="19" height="16" viewBox="0 0 19 16"><path d="M9.5 1 V14.6 M3.2 15 H15.8 M2.4 2.6 H16.6" stroke="#d2d2d2" stroke-width="1.6" fill="none"/><path d="M0.8 9.6 L3.4 3.4 L6 9.6 Q3.4 12.6 0.8 9.6 Z M13 9.6 L15.6 3.4 L18.2 9.6 Q15.6 12.6 13 9.6 Z" fill="none" stroke="#d2d2d2" stroke-width="1.4"/></svg>
<div class="t" style="left:1695px;top:566px;font-size:12px;line-height:14px;color:#d2d2d2;letter-spacing:-0.38px;">DAM-NotIicenced-ShowWatermark</div>
<div class="r" style="left:1383px;top:591px;width:993px;height:1px;background:#e3e3e3;"></div>
<div class="r" style="left:1388px;top:604px;width:13px;height:13px;border:1px solid #8a8a8a;border-radius:2px;box-shadow:inset 0 0 0 0.3px #8a8a8a"></div>
<div class="r" style="left:1426px;top:604px;width:13px;height:13px;border:1px solid #8a8a8a;border-radius:2px;box-shadow:inset 0 0 0 0.3px #8a8a8a"></div>
<svg class="r" style="left:1671px;top:603px;" width="19" height="16" viewBox="0 0 19 16"><path d="M9.5 1 V14.6 M3.2 15 H15.8 M2.4 2.6 H16.6" stroke="#d2d2d2" stroke-width="1.6" fill="none"/><path d="M0.8 9.6 L3.4 3.4 L6 9.6 Q3.4 12.6 0.8 9.6 Z M13 9.6 L15.6 3.4 L18.2 9.6 Q15.6 12.6 13 9.6 Z" fill="none" stroke="#d2d2d2" stroke-width="1.4"/></svg>
<div class="t" style="left:1695px;top:604px;font-size:12px;line-height:14px;color:#d2d2d2;letter-spacing:-0.38px;">OMN_ALLOW_ONLY_AVI_MP4_WMV_MOV_3GPP</div>
<svg class="r" style="left:2011px;top:604px;" width="17" height="15" viewBox="0 0 17 15"><rect x="0" y="2" width="11" height="2.2" fill="#d2d2d2"/><rect x="2" y="0" width="1.8" height="2.6" fill="#d2d2d2"/><rect x="7.2" y="0" width="1.8" height="2.6" fill="#d2d2d2"/><rect x="0" y="5.2" width="10" height="9.6" fill="#d2d2d2"/><circle cx="12.4" cy="10.6" r="4.4" fill="#fff"/><circle cx="12.4" cy="10.6" r="3.4" fill="#d2d2d2"/><rect x="11.6" y="9.4" width="1.6" height="4" fill="#fff"/></svg>
<div class="t" style="left:2033px;top:604px;font-size:12px;line-height:14px;color:#d2d2d2;letter-spacing:-0.3px;">user</div>
<svg class="r" style="left:2063px;top:604px;" width="17" height="15" viewBox="0 0 17 15"><rect x="0" y="2" width="11" height="2.2" fill="#d2d2d2"/><rect x="2" y="0" width="1.8" height="2.6" fill="#d2d2d2"/><rect x="7.2" y="0" width="1.8" height="2.6" fill="#d2d2d2"/><rect x="0" y="5.2" width="10" height="9.6" fill="#d2d2d2"/><circle cx="12.4" cy="10.6" r="4.4" fill="#fff"/><circle cx="12.4" cy="10.6" r="3.4" fill="#d2d2d2"/><rect x="11.6" y="9.4" width="1.6" height="4" fill="#fff"/></svg>
<div class="t" style="left:2085px;top:604px;font-size:12px;line-height:14px;color:#d2d2d2;letter-spacing:-0.3px;">admin</div>
<div class="r" style="left:1383px;top:629px;width:1007px;height:1px;background:#e3e3e3;"></div>
<div class="r" style="left:2376px;top:516px;width:14px;height:113px;background:#fafafa;"></div>
<svg class="r" style="left:2378px;top:523.8px;" width="9" height="6.5" viewBox="0 0 9 6.5"><path d="M4.5 0.3 L8.8 6.2 L0.2 6.2 Z" fill="#8a8a8a" stroke="#8a8a8a" stroke-width="0.6" stroke-linejoin="round"/></svg>
<div class="r" style="left:2378.2px;top:538px;width:8.6px;height:16.600000000000023px;background:#8a8a8a;border-radius:4.3px;"></div>
<svg class="r" style="left:2378px;top:615.5px;" width="9" height="6.5" viewBox="0 0 9 6.5"><path d="M0.2 0.3 L8.8 0.3 L4.5 6.2 Z" fill="#8a8a8a" stroke="#8a8a8a" stroke-width="0.6" stroke-linejoin="round"/></svg>
<svg class="r" style="left:2376px;top:654px;" width="14" height="14" viewBox="0 0 14 14"><path d="M11.8 0.4 L-0.6 12 M11.8 4.4 L3.4 12 M11.8 8.4 L7.4 12" stroke="#d4d4d4" stroke-width="1.2"/></svg>
</body></html>
